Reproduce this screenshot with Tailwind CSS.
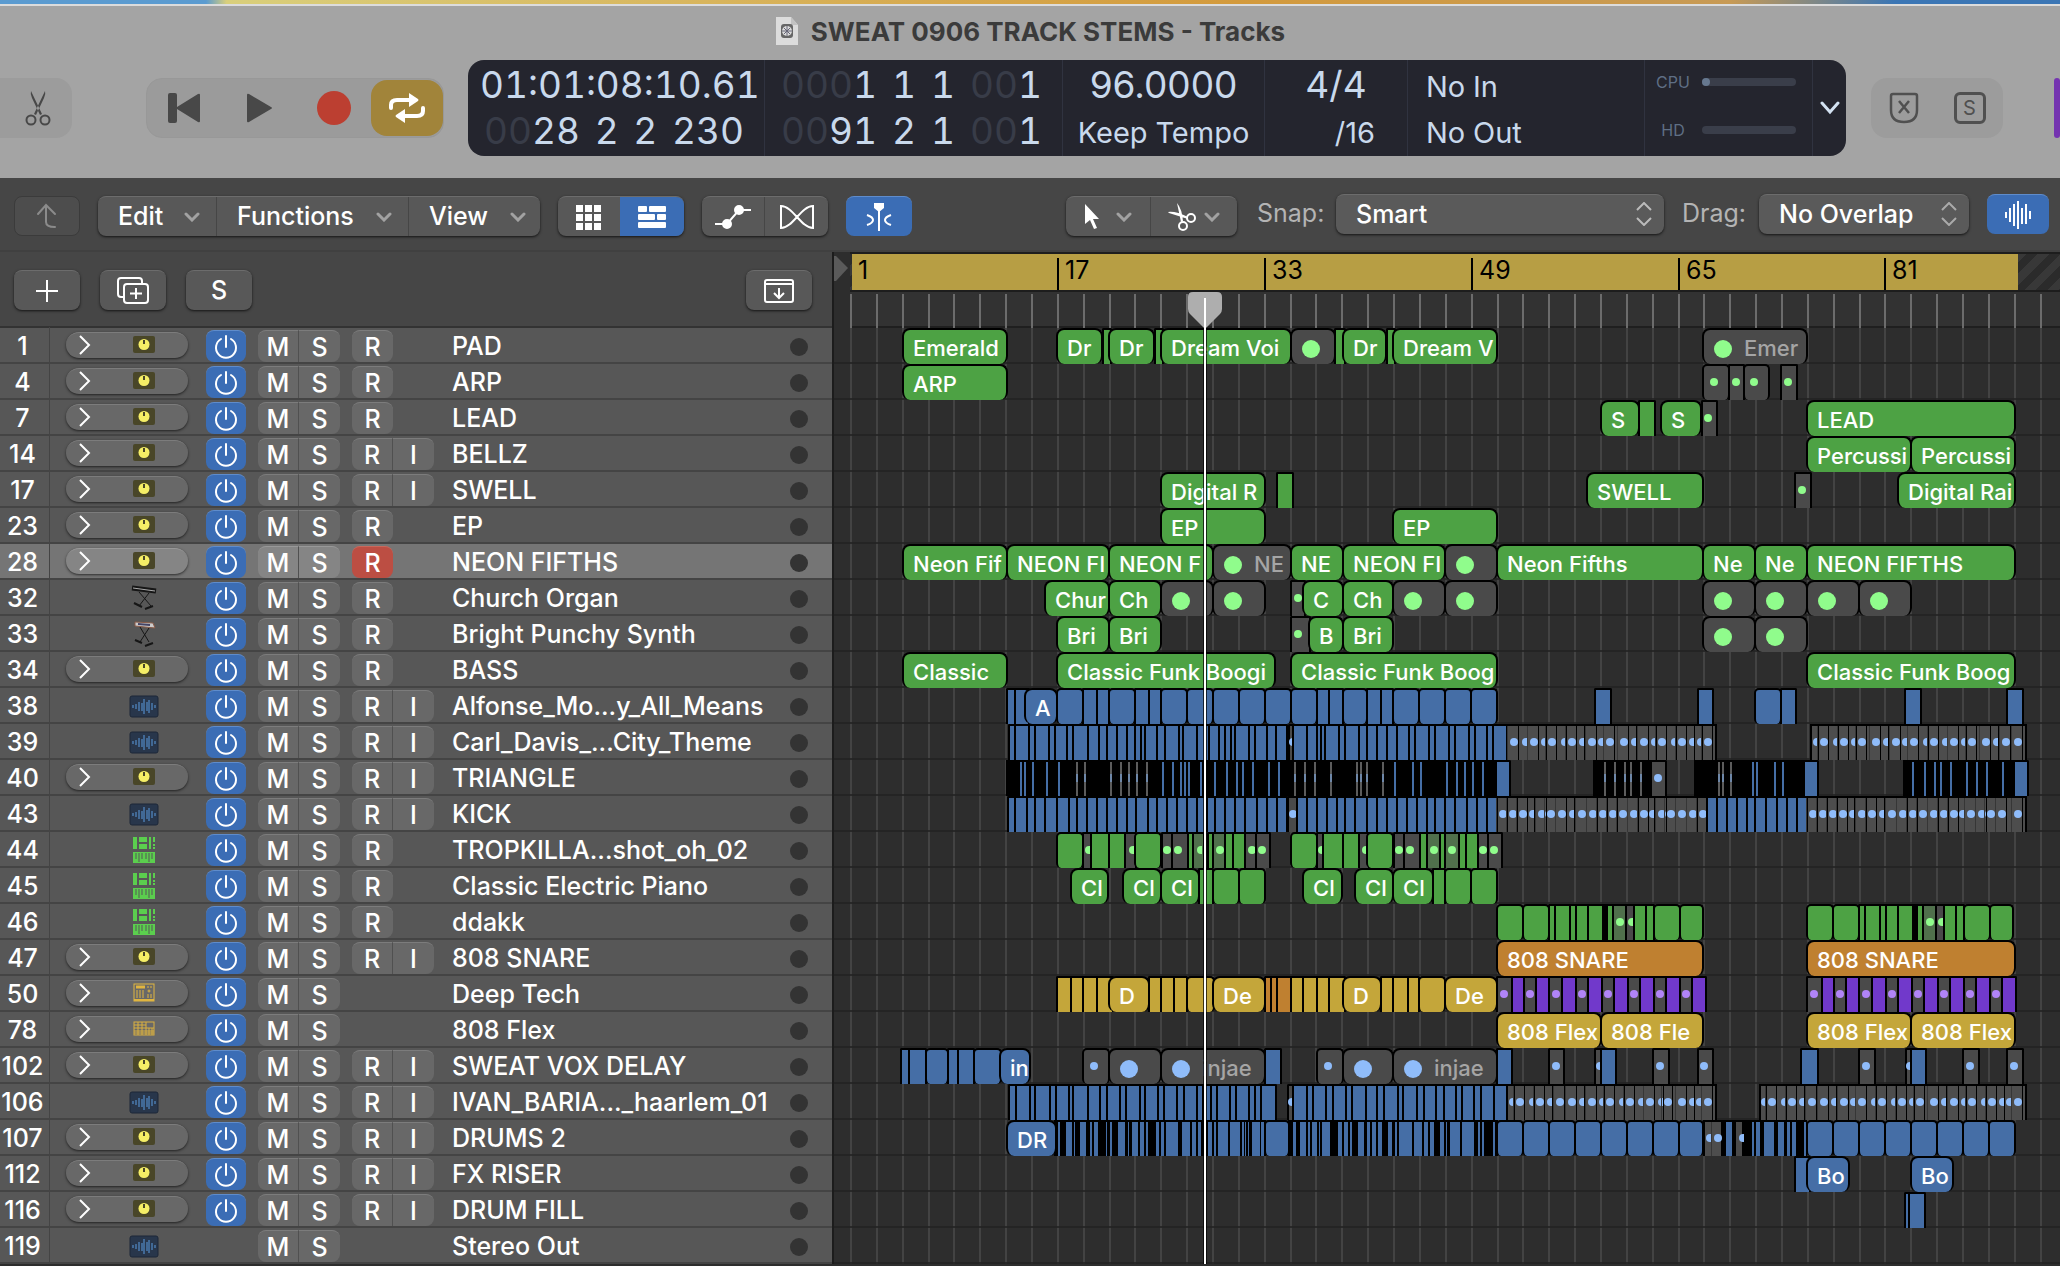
<!DOCTYPE html>
<html lang="en">

<head>
    <meta charset="UTF-8" />
    <title>SWEAT 0906 TRACK STEMS - Tracks</title>
    <script src="https://cdn.jsdelivr.net/npm/@tailwindcss/browser@4"></script>
</head>

<body class="bg-[#2d2d2d] min-h-screen overflow-x-hidden font-[Inter,sans-serif] text-white">
    <!-- Window header -->
    <header class="bg-[#a4a4a4]">
        <div class="h-1 bg-[linear-gradient(90deg,#5b9bd0_10%,#d9cf7c_11%,#d8b45c_35%,#d39a3c_60%,#c79a55_84%,#3b76b5_92%)]"></div>
        <div class="h-[2px] bg-[#dcdcdc]"></div>
        <h1 class="flex h-[50px] items-center justify-center gap-3 text-[26px] font-bold text-[#3b3b3b]">
            <svg width="24" height="30" viewBox="0 0 24 30"><path d="M1 1h15l7 8v20H1z" fill="#dcdcdc" /><path d="M16 1v8h7z" fill="#c2c2c2" /><rect x="6" y="8" width="12" height="14" rx="3" fill="#666" /><circle cx="12" cy="15" r="5" fill="#ddd" /><path d="M12 10v10M7 15h10M9 12l6 6M15 12l-6 6" stroke="#667" /></svg>
            SWEAT 0906 TRACK STEMS - Tracks
        </h1>

        <div class="flex h-[122px] items-start pt-1">
            <div class="mt-[18px] flex h-[60px] w-[72px] shrink-0 items-center justify-center rounded-r-2xl bg-[#9c9c9c] pl-1">
                <button aria-label="Cut"><svg width="26" height="36" viewBox="0 0 26 36"><path d="M6 1q-1 3 1 7l8 17 2-1zM20 1q1 3-1 7l-8 17-2-1z" fill="#484848" /><g fill="none" stroke="#484848" stroke-width="2"><circle cx="6" cy="30" r="4.500" /><circle cx="20" cy="30" r="4.500" /></g></svg></button>
            </div>
            <div class="mt-[18px] ml-[74px] flex h-[60px] w-[298px] shrink-0 items-center rounded-2xl border border-[#989898] bg-[#9b9b9b]">
                <button class="flex w-[74px] justify-center" aria-label="Go to start"><svg width="34" height="30" viewBox="0 0 34 30" fill="#484848"><rect x="1" y="0" width="9" height="30" rx="2" /><path d="M33 2v26q0 2-2 1L10 16q-2-1 0-2L31 1q2-1 2 1z" /></svg></button>
                <button class="flex w-[76px] justify-center" aria-label="Play"><svg width="27" height="30" viewBox="0 0 27 30" fill="#484848"><path d="M1 2v26q0 2 2 1l22-13q2-1 0-2L3 1Q1 0 1 2z" /></svg></button>
                <button class="flex w-[74px] justify-center" aria-label="Record"><span class="size-[34px] rounded-full bg-[#bc3f31]"></span></button>
                <button class="flex h-[56px] flex-1 items-center justify-center rounded-2xl bg-[#a1843a]" aria-label="Cycle"><svg width="38" height="32" viewBox="0 0 38 32" fill="none" stroke="#fff" stroke-width="4" stroke-linecap="round"><path d="M3 16v-3q0-5 6-5h13M35 16v3q0 5-6 5H16" /><path d="M21 1l9 6q1 1 0 2l-9 6zM17 17l-9 6q-1 1 0 2l9 6z" fill="#fff" stroke="none" /></svg></button>
            </div>

            <!-- LCD -->
            <div class="ml-6 flex h-24 w-[1378px] shrink-0 items-stretch rounded-2xl bg-[#24252e] text-[37px] leading-[46px] tabular-nums text-[#c9d9ec]">
                <div class="flex w-[297px] flex-col border-r border-[#303340] pl-3 pr-5 pt-[2px]">
                    <div class="whitespace-nowrap">01:01:08:10.61</div>
                    <div class="flex justify-between pl-1"><span><span class="text-[#383c48]">00</span>28</span><span>2</span><span>2</span><span>230</span></div>
                </div>
                <div class="flex w-[298px] flex-col border-r border-[#303340] pl-4 pr-5 pt-[2px]">
                    <div class="flex justify-between"><span><span class="text-[#383c48]">000</span>1</span><span>1</span><span>1</span><span><span class="text-[#383c48]">00</span>1</span></div>
                    <div class="flex justify-between"><span><span class="text-[#383c48]">00</span>91</span><span>2</span><span>1</span><span><span class="text-[#383c48]">00</span>1</span></div>
                </div>
                <div class="w-[202px] border-r border-[#303340] pt-[2px] text-center">
                    <div class="proportional-nums">96.0000</div>
                    <div class="text-[29px] leading-[50px]">Keep Tempo</div>
                </div>
                <div class="w-[143px] border-r border-[#303340] pt-[2px] text-center">
                    <div>4/4</div>
                    <div class="pr-8 text-right text-[29px] leading-[50px] proportional-nums">/16</div>
                </div>
                <div class="w-[237px] border-r border-[#303340] pl-[18px] pt-1 text-[29px]">
                    <div>No In</div>
                    <div>No Out</div>
                </div>
                <div class="flex w-[168px] flex-col justify-between border-r border-[#303340] pb-4 pl-2 pr-4 pt-3 text-base leading-5 text-[#5f6f85]">
                    <div class="flex items-center justify-between"><span class="w-10 text-center">CPU</span><span class="h-2 w-[94px] rounded-full bg-[#3a3e4a]"><span class="block size-2 rounded-full bg-[#66788f]"></span></span></div>
                    <div class="flex items-center justify-between"><span class="w-10 text-center">HD</span><span class="h-2 w-[94px] rounded-full bg-[#3a3e4a]"></span></div>
                </div>
                <button class="flex flex-1 items-center justify-center" aria-label="Display mode"><svg width="20" height="14" viewBox="0 0 20 14" fill="none" stroke="#d3e2f2" stroke-width="3" stroke-linecap="round"><path d="M2 2l8 9 8-9" /></svg></button>
            </div>

            <div class="mt-[18px] ml-[25px] flex h-[60px] w-[132px] shrink-0 items-center justify-around rounded-2xl bg-[#9c9c9c]">
                <button aria-label="Replace"><svg width="30" height="32" viewBox="0 0 30 32" fill="none" stroke="#505050" stroke-width="2.500"><path d="M4 2h22q2 0 2 2v14q0 12-13 12T2 18V4q0-2 2-2zM10 9l10 12M20 9L10 21" /></svg></button>
                <button class="flex size-8 items-center justify-center rounded-md border-[3px] border-[#505050] text-xl text-[#505050]" aria-label="Solo">S</button>
            </div>
            <div class="mt-[18px] ml-[51px] h-[60px] w-[60px] rounded-2xl bg-[#7433b0]"></div>
        </div>
    </header>

    <!-- Tracks menu bar -->
    <nav class="flex h-[74px] items-center whitespace-nowrap border-b-2 border-[#404040] bg-[#464646] pl-[14px] pt-1 text-[25px] font-medium">
        <button class="flex h-10 w-[66px] shrink-0 items-center justify-center rounded-lg border border-[#3b3b3b] bg-[#4d4d4d]" aria-label="Up"><svg width="22" height="26" viewBox="0 0 22 26" fill="none" stroke="#8b8b8b" stroke-width="2" stroke-linecap="round"><path d="M2 11l8-9 9 9M10 2v17q0 5 9 5" /></svg></button>
        <div class="ml-[18px] flex h-10 w-[442px] shrink-0 rounded-lg border-t border-[#6c6c6c] bg-[#585858] shadow-sm shadow-black/60">
            <button class="flex w-[119px] items-center justify-between border-r border-[#464646] pl-5 pr-4">Edit<svg width="16" height="10" viewBox="0 0 16 10" fill="none" stroke="#a2a2a2" stroke-width="3" stroke-linecap="round"><path d="M2 2l6 6 6-6" /></svg></button>
            <button class="flex w-[192px] items-center justify-between border-r border-[#464646] pl-5 pr-4">Functions<svg width="16" height="10" viewBox="0 0 16 10" fill="none" stroke="#a2a2a2" stroke-width="3" stroke-linecap="round"><path d="M2 2l6 6 6-6" /></svg></button>
            <button class="flex flex-1 items-center justify-between pl-5 pr-[14px]">View<svg width="16" height="10" viewBox="0 0 16 10" fill="none" stroke="#a2a2a2" stroke-width="3" stroke-linecap="round"><path d="M2 2l6 6 6-6" /></svg></button>
        </div>
        <div class="ml-[18px] flex h-10 w-[126px] shrink-0 overflow-hidden rounded-lg border-t border-[#6c6c6c] bg-[#585858] shadow-sm shadow-black/60">
            <button class="flex w-[62px] items-center justify-center" aria-label="Grid"><svg width="26" height="26" viewBox="0 0 26 26" fill="#fff"><path d="M0 1h7v7H0zM9 1h7v7H9zM18 1h7v7h-7zM0 10h7v7H0zM9 10h7v7H9zM18 10h7v7h-7zM0 19h7v7H0zM9 19h7v7H9zM18 19h7v7h-7z" /></svg></button>
            <button class="flex flex-1 items-center justify-center bg-[#3b6db5]" aria-label="Tracks"><svg width="28" height="24" viewBox="0 0 28 24" fill="#fff"><rect y="1" width="9" height="6" rx="1" /><rect x="11" y="1" width="17" height="6" rx="1" /><rect y="9" width="17" height="6" rx="1" /><rect x="19" y="9" width="9" height="6" rx="1" /><rect y="17" width="28" height="6" rx="1" /></svg></button>
        </div>
        <div class="ml-[18px] flex h-10 w-[126px] shrink-0 rounded-lg border-t border-[#6c6c6c] bg-[#585858] shadow-sm shadow-black/60">
            <button class="flex w-[63px] items-center justify-center border-r border-[#464646]" aria-label="Automation"><svg width="38" height="26" viewBox="0 0 38 26" fill="#fff" stroke="#fff" stroke-width="2"><path d="M1 20h12L25 6h12" fill="none" /><circle cx="13" cy="20" r="4" /><circle cx="25" cy="6" r="4" /></svg></button>
            <button class="flex w-[63px] items-center justify-center" aria-label="Flex"><svg width="36" height="24" viewBox="0 0 36 24" fill="none" stroke="#fff" stroke-width="2"><path d="M2 1v22C14 23 22 1 34 1v22C22 23 14 1 2 1z" /></svg></button>
        </div>
        <button class="ml-[18px] flex h-10 w-[66px] shrink-0 items-center justify-center rounded-lg border-t border-[#5f8ccb] bg-[#3b6db5]" aria-label="Catch"><svg width="28" height="30" viewBox="0 0 28 30" fill="none" stroke="#fff" stroke-width="2"><path d="M9 1h10v5l-5 4-5-4z" fill="#fff" stroke="none" /><path d="M14 8v21M2 13q6 2 6 5t-6 5M26 13q-6 2-6 5t6 5" /></svg></button>

        <div class="ml-[154px] flex h-10 w-[171px] shrink-0 rounded-lg border-t border-[#6c6c6c] bg-[#585858] shadow-sm shadow-black/60">
            <button class="flex w-[85px] items-center justify-center gap-4 border-r border-[#464646]" aria-label="Pointer tool"><svg width="16" height="26" viewBox="0 0 16 26" fill="#fff"><path d="M1 0v20l5-4 4 9 3-1-4-9h6z" /></svg><svg width="16" height="10" viewBox="0 0 16 10" fill="none" stroke="#a2a2a2" stroke-width="3" stroke-linecap="round"><path d="M2 2l6 6 6-6" /></svg></button>
            <button class="flex flex-1 items-center justify-center gap-2" aria-label="Scissors tool"><svg width="28" height="28" viewBox="0 0 28 28"><path d="M0 9q8-1 20 5v2L1 10zM9 0q5 6 6 18l-2 1z" fill="#fff" /><g fill="none" stroke="#fff" stroke-width="2"><circle cx="23" cy="15" r="4" /><circle cx="15" cy="23" r="4" /></g></svg><svg width="16" height="10" viewBox="0 0 16 10" fill="none" stroke="#a2a2a2" stroke-width="3" stroke-linecap="round"><path d="M2 2l6 6 6-6" /></svg></button>
        </div>
        <label for="snap" class="mb-1 ml-5 w-[71px] shrink-0 font-normal text-[#b4b4b4]">Snap:</label>
        <div class="relative mb-1 ml-2 h-10 w-[328px] shrink-0">
            <select id="snap" class="h-10 w-full appearance-none rounded-lg border-t border-[#6c6c6c] bg-[#5a5a5a] pl-5 shadow-sm shadow-black/60"><option>Smart</option></select>
            <svg class="pointer-events-none absolute right-3 top-2" width="16" height="24" viewBox="0 0 16 24" fill="none" stroke="#bbb" stroke-width="2"><path d="M1 8l7-7 7 7M1 16l7 7 7-7" /></svg>
        </div>
        <label for="drag" class="mb-1 ml-[18px] w-[73px] shrink-0 font-normal text-[#b4b4b4]">Drag:</label>
        <div class="relative mb-1 h-10 w-[210px] shrink-0 ml-1">
            <select id="drag" class="h-10 w-full appearance-none rounded-lg border-t border-[#6c6c6c] bg-[#5a5a5a] pl-5 shadow-sm shadow-black/60"><option>No Overlap</option></select>
            <svg class="pointer-events-none absolute right-3 top-2" width="16" height="24" viewBox="0 0 16 24" fill="none" stroke="#aaa" stroke-width="2"><path d="M1 8l7-7 7 7M1 16l7 7 7-7" /></svg>
        </div>
        <button class="mb-1 ml-[18px] flex h-10 w-[62px] shrink-0 items-center justify-center rounded-lg border-t border-[#5f8ccb] bg-[#3b6db5]" aria-label="Waveform zoom"><svg width="26" height="30" viewBox="0 0 26 30" stroke="#fff" stroke-width="2"><path d="M1 12v6M5 8v14M9 4v22M13 1v28M17 8v16M21 4v20M25 11v8" /></svg></button>
    </nav>

    <main class="flex">
        <!-- Track headers -->
        <section class="w-[834px] shrink-0 border-r-2 border-[#1c1c1c] bg-[#464646]">
            <div class="flex h-[76px] items-center border-b-2 border-[#333] pl-[14px] pr-5 pt-[2px] text-[25px] font-medium">
                <button class="flex h-10 w-[66px] items-center justify-center rounded-lg border-t border-[#6c6c6c] bg-[#585858] shadow-sm shadow-black/60" aria-label="Add track"><svg width="22" height="22" viewBox="0 0 22 22" stroke="#fff" stroke-width="2"><path d="M11 0v22M0 11h22" /></svg></button>
                <button class="ml-5 flex h-10 w-[66px] items-center justify-center rounded-lg border-t border-[#6c6c6c] bg-[#585858] shadow-sm shadow-black/60" aria-label="Duplicate track"><svg width="32" height="27" viewBox="0 0 32 27" fill="none" stroke="#fff" stroke-width="2"><path d="M7 20H4q-3 0-3-3V4q0-3 3-3h18q3 0 3 3v2" /><rect x="7" y="7" width="24" height="19" rx="3" /><path d="M19 11v11M13 16.500h12" /></svg></button>
                <button class="ml-5 flex h-10 w-[66px] items-center justify-center rounded-lg border-t border-[#6c6c6c] bg-[#585858] shadow-sm shadow-black/60">S</button>
                <button class="ml-auto flex h-10 w-[66px] items-center justify-center rounded-lg border-t border-[#6c6c6c] bg-[#585858] shadow-sm shadow-black/60" aria-label="Track import"><svg width="30" height="24" viewBox="0 0 30 24" fill="none" stroke="#fff" stroke-width="2"><rect x="1" y="1" width="28" height="22" rx="2" /><path d="M1 5h28M15 9v10M10 14l5 5 5-5" /></svg></button>
            </div>
            <div id="headers" class="text-[25px] font-medium"></div>
        </section>

        <!-- Arrange area -->
        <section class="relative min-w-0 flex-1 overflow-hidden bg-[#2d2d2d] pl-4">
            <svg class="absolute left-0 top-1" width="16" height="26" viewBox="0 0 16 26"><path d="M0 0h2l12 12L2 25H0z" fill="#5a5a5a" /></svg>
            <div class="relative">
                <div class="h-[76px] border-b-2 border-[#1f1f1f] bg-[#323232]">
                    <div class="h-10 border-b-2 border-t-2 border-[#1d1d1d] bg-[repeating-linear-gradient(135deg,#2b2b2b_0px,#2b2b2b_8px,#383838_8px,#383838_16px)]">
                        <div class="ml-[2px] h-9 w-[1166px] bg-[#b79e44]"></div>
                    </div>
                </div>
                <div id="ruler" class="absolute inset-0 h-[76px] text-[25px] leading-8 text-black"></div>
                <div id="grid" class="absolute inset-0 top-[76px]"></div>
                <div id="lanes" class="relative text-[22px] font-medium"></div>
                <!-- Playhead -->
                <div class="absolute inset-y-0 left-[338px] w-[34px] pt-10">
                    <svg width="34" height="36" viewBox="0 0 34 36"><path d="M5 0h24q5 0 5 5v12q0 3-2 5L19 35q-2 2-4 0L2 22q-2-2-2-5V5q0-5 5-5z" fill="#aeaeae" /></svg>
                    <div class="absolute bottom-0 left-[15px] top-[76px] w-1 bg-black/70"></div>
                    <div class="absolute bottom-0 left-4 top-[46px] w-[2px] bg-white"></div>
                </div>
            </div>
        </section>
    </main>

    <script>
        const fills = {
            g: "bg-[#4da244]",
            b: "bg-[#456ea6]",
            o: "bg-[#bf8030]",
            y: "bg-[#c4a63a]",
            p: "bg-[#7139cb]",
            m: "bg-[#4a4a4a]",
            t: "bg-[#50704c]"
        };
        const dotFills = { g: "bg-[#90fc8c]", b: "bg-[#8fbcfa]", p: "bg-[#b184f8]" };

        const box = (cls, x, w, inner = "") => `<div class="absolute inset-y-0 ${cls}" style="left:${x}px;width:${w}px">${inner}</div>`;

        // small dot of a muted region, centered on x; a negative x is a dot cut off by its neighbour
        const dot = (c, x) => x < 0 ?
            `<div class="absolute top-[14px] h-2 w-[5px] rounded-l-full ${dotFills[c]}" style="left:${-x - 3}px"></div>` :
            `<div class="absolute top-[14px] size-2 rounded-full ${dotFills[c]}" style="left:${x - 4}px"></div>`;

        // one region
        function reg(c, a, b, label = "") {
            const w = b - a + 2;
            const r = label ? "rounded-lg" : w > 22 ? "rounded-[5px]" : "rounded-t-[2px]";
            const text = label ? `<span class="absolute left-[9px] top-px leading-[35px]">${label}</span>` : "";
            return box(`overflow-hidden whitespace-nowrap border-x-2 border-t-2 border-black ${r} ${fills[c]}`, a, w, text);
        }

        // muted region with a big dot
        function mute(c, a, b, label = "") {
            return box("overflow-hidden whitespace-nowrap rounded-lg border-x-2 border-t-2 border-black bg-[#4a4a4a]", a, b - a + 2,
                `<span class="absolute left-[10px] top-[10px] size-[18px] rounded-full ${dotFills[c]}"></span><span class="absolute left-10 top-px leading-[35px] text-[#a5a5a5]">${label}</span>`);
        }

        // muted region with a small dot
        const tiny = (c, a, b, x, fill = "m") => reg(fill, a, b) + dot(c, x);

        // neighbouring regions that share their edges
        function cuts(c, list) {
            let out = "";
            for (let i = 0; i < list.length - 1; i++) out += reg(c, list[i], list[i + 1]);
            return out;
        }

        // very short regions: only hairlines are left between the outlines
        function ticks(a, b, colors) {
            let out = box("bg-black", a, b - a);
            (colors.b || []).forEach(x => out += box("mt-[2px] bg-[#456ea6]", x, 2));
            (colors.m || []).forEach(x => out += box("mt-[2px] bg-[#5c5c5c]", x, 2, '<span class="absolute top-3 h-2 w-full bg-[#6e87a8]"></span>'));
            return out;
        }

        function slices(c, a, b, list) {
            let out = box("bg-black", a, b - a);
            for (let i = 0; i < list.length; i += 2) out += box(`mt-[2px] ${fills[c]}`, list[i], list[i + 1] - list[i]);
            return out;
        }

        // a run of muted short regions
        function dots(c, a, b, list) {
            let out = box("border-x-2 border-t-2 border-black bg-[#4d4d4d]", a, b - a + 2);
            list.forEach(x => {
                if (x > 0) out += box("mt-[2px] bg-[#363636]", x - 7, 1);
                out += dot(c, x);
                out += box("bg-black", x < 0 ? -x + 2 : x + 4, 1);
            });
            return out;
        }

        function snare(o) {
            return cuts("g", [646, 672, 698, 704, 719, 725, 737, 752].map(x => x + o)) + slices("g", 752 + o, 765 + o, [758 + o, 762 + o]) +
                tiny("g", 762 + o, 775 + o, 770 + o, "t") + tiny("g", 775 + o, 783 + o, -781 - o) +
                cuts("g", [783, 795, 803, 829, 852].map(x => x + o));
        }

        function deep(o) {
            const p = [646, 661, 673, 685, 698, 711, 725, 737, 751, 763, 777, 789, 803, 815, 829, 841, 855];
            const d = [654, 680, 706, 732, 758, 784, 810, 836];
            let out = "";
            for (let i = 0; i < 8; i++) out += tiny("p", p[2 * i] + o, p[2 * i + 1] + o, d[i] + o) + reg("p", p[2 * i + 1] + o, p[2 * i + 2] + o);
            return out;
        }

        const tracks = [
            [1, "PAD", "k", "R", reg("g", 52, 156, "Emerald") + reg("g", 206, 251, "Dr") + reg("g", 252, 260) + reg("g", 258, 303, "Dr") + reg("g", 304, 312) + reg("g", 310, 440, "Dream Voi") + mute("g", 440, 484) + reg("g", 484, 494) + reg("g", 492, 535, "Dr") + reg("g", 536, 544) + reg("g", 542, 646, "Dream V") + mute("g", 852, 956, "Emer")],
            [4, "ARP", "k", "R", reg("g", 52, 156, "ARP") + tiny("g", 852, 878, 864) + tiny("g", 878, 893, 886) + tiny("g", 893, 918, 904) + tiny("g", 930, 946, 938)],
            [7, "LEAD", "k", "R", reg("g", 750, 788, "S") + reg("g", 788, 804) + reg("g", 810, 850, "S") + tiny("g", 851, 866, 858) + reg("g", 956, 1164, "LEAD")],
            [14, "BELLZ", "k", "RI", reg("g", 956, 1060, "Percussi") + reg("g", 1060, 1164, "Percussi")],
            [17, "SWELL", "k", "RI", reg("g", 310, 414, "Digital R") + reg("g", 426, 442) + reg("g", 736, 852, "SWELL") + tiny("g", 944, 960, 952) + reg("g", 1047, 1164, "Digital Rai")],
            [23, "EP", "k", "R", reg("g", 310, 414, "EP") + reg("g", 542, 646, "EP")],
            [28, "NEON FIFTHS", "k", "R", reg("g", 52, 156, "Neon Fif") + reg("g", 156, 258, "NEON FI") + reg("g", 258, 362, "NEON F") + mute("g", 362, 440, "NE") + reg("g", 440, 492, "NE") + reg("g", 492, 594, "NEON FI") + mute("g", 594, 646) + reg("g", 646, 852, "Neon Fifths") + reg("g", 852, 904, "Ne") + reg("g", 904, 956, "Ne") + reg("g", 956, 1164, "NEON FIFTHS")],
            [32, "Church Organ", "organ", "R", reg("g", 194, 258, "Chur") + reg("g", 258, 310, "Ch") + mute("g", 310, 362) + mute("g", 362, 414) + tiny("g", 440, 454, 448) + reg("g", 452, 492, "C") + reg("g", 492, 542, "Ch") + mute("g", 542, 594) + mute("g", 594, 646) + mute("g", 852, 904) + mute("g", 904, 956) + mute("g", 956, 1008) + mute("g", 1008, 1060)],
            [33, "Bright Punchy Synth", "synth", "R", reg("g", 206, 258, "Bri") + reg("g", 258, 310, "Bri") + tiny("g", 440, 459, 448) + reg("g", 458, 492, "B") + reg("g", 492, 542, "Bri") + mute("g", 852, 904) + mute("g", 904, 956)],
            [34, "BASS", "k", "R", reg("g", 52, 156, "Classic") + reg("g", 206, 424, "Classic Funk Boogi") + reg("g", 440, 646, "Classic Funk Boog") + reg("g", 956, 1164, "Classic Funk Boog")],
            [38, "Alfonse_Mo...y_All_Means", "wave", "RI", cuts("b", [156, 164, 178]) + reg("b", 174, 206, "A") + cuts("b", [206, 232, 246, 258, 284, 298, 310, 336, 362, 388, 414, 440, 466, 478, 492, 516, 530, 542, 568, 594, 620, 646]) + reg("b", 744, 760) + reg("b", 847, 862) + cuts("b", [904, 930, 945]) + reg("b", 1054, 1070) + reg("b", 1156, 1172)],
            [39, "Carl_Davis_...City_Theme", "wave", "RI", cuts("b", [158, 164, 178, 184, 198, 204, 216, 222, 237, 248, 256, 266, 276, 284, 290, 294, 306, 314, 328, 332, 346, 358, 368, 374, 380, 384, 398, 404, 416, 425, 436]) + tiny("b", 438, 443, -442) + cuts("b", [442, 456, 466, 470, 474, 488, 494, 508, 516, 526, 536, 546, 558, 564, 578, 584, 598, 604, 618, 624, 636, 642, 656]) + dots("b", 656, 865, [664, -675, 684, -694, 702, -714, 722, -732, 742, -751, 760, 774, -784, 794, -804, 812, -824, 832, -842, -850, 858]) + dots("b", 960, 1175, [-966, 974, -986, 994, -1004, 1012, 1026, -1036, 1046, -1055, 1064, -1076, 1084, -1095, 1104, -1114, 1122, 1136, -1146, 1156, 1168])],
            [40, "TRIANGLE", "k", "RI", ticks(156, 647, { b: [170, 174, 182, 196, 208, 312, 322, 330, 334, 338, 350, 364, 376, 386, 392, 402, 418, 428, 544, 562, 570, 596, 606, 614, 622, 632], m: [226, 234, 260, 270, 278, 286, 296, 444, 454, 464, 480, 506, 510, 516, 532] }) + reg("b", 645, 659) + ticks(743, 803, { m: [754, 764, 774, 780, 790] }) + tiny("b", 800, 815, 808) + ticks(844, 956, { m: [868, 872, 880], b: [902, 906, 924, 932] }) + reg("b", 953, 967) + ticks(1053, 1164, { b: [1062, 1074, 1084, 1090, 1100, 1116, 1126, 1136, 1152] }) + reg("b", 1163, 1177)],
            [43, "KICK", "wave", "RI", cuts("b", [157, 164, 176, 184, 194, 206, 218, 226, 236, 246, 256, 266, 276, 285, 297, 306, 316, 326, 336, 346, 356, 364, 374, 384, 394, 406, 416, 426, 436]) + tiny("b", 437, 446, 443) + cuts("b", [446, 456, 466, 476, 486, 494, 504, 516, 526, 536, 546, 556, 566, 576, 584, 594, 604, 616, 626, 636, 646]) + dots("b", 646, 856, [653, 663, 673, -682, 692, 701, 712, -722, 732, 743, 753, 763, 773, 784, 794, -802, 812, 821, 832, 843, 853]) + cuts("b", [856, 866, 876, 886, 896, 904, 915, 926, 936, 946, 956]) + dots("b", 956, 1175, [963, 973, 983, 993, -1002, 1012, 1022, -1032, 1042, 1053, 1063, 1073, 1084, 1094, 1104, -1112, 1121, 1132, 1141, 1152, 1168])],
            [44, "TROPKILLA...shot_oh_02", "piano", "R", reg("g", 206, 232) + tiny("g", 232, 241, -238) + cuts("g", [240, 258, 274]) + tiny("g", 274, 285, -282) + reg("g", 284, 310) + tiny("g", 311, 321, 317) + tiny("g", 321, 337, 328) + reg("g", 337, 342) + tiny("g", 342, 353, -350, "t") + reg("g", 357, 362) + tiny("g", 362, 374, 370, "t") + cuts("g", [374, 382, 394]) + tiny("g", 394, 405, 402) + tiny("g", 405, 419, 412) + reg("g", 440, 466) + tiny("g", 466, 474, -471) + cuts("g", [472, 492, 508]) + tiny("g", 508, 518, -515) + reg("g", 516, 542) + tiny("g", 543, 553, 549) + tiny("g", 553, 569, 560) + reg("g", 569, 576) + tiny("g", 576, 589, 584, "t") + reg("g", 589, 594) + tiny("g", 594, 608, 602, "t") + cuts("g", [608, 615, 627]) + tiny("g", 627, 637, 633) + tiny("g", 637, 651, 644)],
            [45, "Classic Electric Piano", "piano", "R", reg("g", 220, 257, "Cl") + reg("g", 272, 310, "Cl") + reg("g", 310, 348, "Cl") + cuts("g", [348, 362, 388, 414]) + reg("g", 452, 491, "Cl") + reg("g", 504, 542, "Cl") + reg("g", 542, 582, "Cl") + cuts("g", [582, 594, 620, 646])],
            [46, "ddakk", "piano", "R", snare(0) + snare(310)],
            [47, "808 SNARE", "k", "RI", reg("o", 646, 852, "808 SNARE") + reg("o", 956, 1164, "808 SNARE")],
            [50, "Deep Tech", "drum", "", cuts("y", [206, 220, 232, 246, 262]) + reg("y", 258, 298, "D") + cuts("y", [298, 310, 323, 336, 363]) + reg("y", 362, 414, "De") + cuts("o", [414, 420, 426, 440]) + cuts("y", [440, 452, 466, 478, 494]) + reg("y", 492, 530, "D") + cuts("y", [530, 542, 557, 568, 594]) + reg("y", 594, 646, "De") + deep(0) + deep(310)],
            [78, "808 Flex", "pads", "", reg("y", 646, 750, "808 Flex") + reg("y", 750, 852, "808 Fle") + reg("y", 956, 1060, "808 Flex") + reg("y", 1060, 1164, "808 Flex")],
            [102, "SWEAT VOX DELAY", "k", "RI", cuts("b", [50, 58, 75, 97, 107, 123, 150]) + reg("b", 149, 179, "in") + tiny("b", 232, 258, 244) + mute("b", 258, 310) + mute("b", 310, 414, "injae") + reg("b", 414, 430) + tiny("b", 466, 492, 478) + mute("b", 492, 542) + mute("b", 542, 646, "injae") + reg("b", 646, 661) + tiny("b", 698, 713, 706) + tiny("b", 744, 752, -749) + reg("b", 750, 765) + tiny("b", 802, 818, 810) + tiny("b", 847, 862, 854) + reg("b", 950, 967) + tiny("b", 1008, 1024, 1016) + tiny("b", 1055, 1062, -1059) + reg("b", 1060, 1075) + tiny("b", 1112, 1128, 1120) + tiny("b", 1156, 1172, 1164)],
            [106, "IVAN_BARIA..._haarlem_01", "wave", "RI", cuts("b", [158, 165, 179, 184, 199, 205, 218, 222, 237, 249, 256, 269, 275, 289, 294, 307, 313, 326, 333, 346, 352, 360, 366, 379, 385, 398, 404, 410, 425]) + tiny("b", 437, 443, -441) + cuts("b", [442, 456, 462, 475, 482, 495, 501, 515, 526, 533, 547, 552, 566, 573, 585, 593, 605, 611, 623, 630, 643, 656]) + dots("b", 656, 865, [-662, 670, -682, 690, -700, 710, 722, -732, 742, -752, 760, -772, 780, -791, 800, -811, 818, 832, -842, -849, 858]) + dots("b", 909, 1175, [-914, 922, -934, 942, -952, 962, 974, -984, 994, -1003, 1012, -1024, 1032, -1044, 1052, -1062, 1070, 1084, -1094, 1104, -1114, 1122, -1134, 1142, -1152, -1159, 1168])],
            [107, "DRUMS 2", "k", "RI", slices("b", 204, 416, [208, 210, 216, 222, 224, 225, 230, 236, 240, 242, 244, 248, 256, 257, 260, 262, 268, 275, 278, 279, 282, 288, 290, 294, 296, 298, 306, 309, 311, 314, 316, 328, 332, 340, 342, 346, 348, 351, 358, 362, 364, 366, 368, 378, 380, 390, 392, 394, 395, 396, 398, 399, 402, 410, 411, 414]) + reg("b", 156, 205, "DR") + slices("b", 438, 648, [443, 446, 450, 456, 458, 460, 462, 467, 469, 470, 472, 480, 488, 492, 494, 498, 500, 502, 508, 514, 517, 520, 522, 526, 528, 532, 538, 542, 545, 547, 549, 562, 564, 572, 574, 578, 580, 584, 590, 594, 596, 597, 600, 610, 612, 624, 628, 630, 632, 634, 643, 645]) + reg("b", 414, 438) + cuts("b", [646, 672, 698, 724, 750, 776, 802, 828, 852]) + dots("b", 853, 871, [-859, 868]) + slices("b", 872, 957, [876, 882, 902, 904, 906, 910, 914, 924, 928, 934, 937, 940, 942, 946, 954, 956]) + tiny("b", 884, 892, -892) + cuts("b", [956, 982, 1008, 1034, 1060, 1086, 1112, 1138, 1164])],
            [112, "FX RISER", "k", "RI", reg("b", 944, 959) + reg("b", 956, 998, "Bo") + reg("b", 1060, 1102, "Bo")],
            [116, "DRUM FILL", "k", "RI", cuts("b", [1054, 1058, 1074])],
            [119, "Stereo Out", "wave", "-", ""]
        ];

        const icons = {
            k: '<svg width="22" height="17" viewBox="0 0 22 17"><rect width="22" height="17" rx="2" fill="#494628"/><circle cx="11" cy="8.500" r="5.500" fill="#f5ee66"/><path d="M11 4v4" stroke="#494628" stroke-width="2"/></svg>',
            wave: '<svg width="30" height="23" viewBox="0 0 30 23"><rect x="1" y="1" width="28" height="21" rx="2" fill="#28364b" stroke="#1d2738"/><path d="M4 10v3M7 9v5M10 7v9M13 8v8M15 4v15M18 7v9M20 5v13M23 8v7M26 10v3" stroke="#5b9be0"/></svg>',
            piano: '<svg width="22" height="26" viewBox="0 0 22 26" fill="#5bce4e"><path d="M0 0h4v12H0zM6 0h8v5H6zM6 7h8v5H6zM16 0h2v12h-2zM20 0h2v5h-2zM20 7h2v2h-2zM20 10h2v2h-2zM0 15h22v11H0z"/><path d="M3 16v6M6 16v9M9 16v6M13 16v6M16 16v9M19 16v6" stroke="#575757"/></svg>',
            drum: '<svg width="22" height="19" viewBox="0 0 22 19" fill="none" stroke="#e0b540"><rect x="1" y="1" width="20" height="17"/><path d="M3 4h9" stroke-width="3"/><path d="M3 8h9M3 10h9M3 12h9M3 14h9M14 4h5M14 12h5M14 14h5" stroke-dasharray="2 1"/><circle cx="16" cy="8" r="1"/><path d="M1 17h20" stroke-width="2"/></svg>',
            pads: '<svg width="22" height="15" viewBox="0 0 22 15" fill="none" stroke="#d9b040"><rect x="1" y="1" width="20" height="13"/><path d="M5 1v13M9 1v13M13 1v13M1 4h12M1 7h20M1 10h20M1 12h20M16 7v7M19 7v7"/></svg>',
            organ: '<svg width="28" height="26" viewBox="0 0 28 26" fill="none" stroke="#161616" stroke-width="1"><path d="M2 3l24 3" stroke-width="5"/><path d="M3 3l22 3" stroke="#aaa"/><path d="M9 7l12 14M19 8L9 21"/><path d="M4 18l8 4M15 24l8-3" stroke-width="2"/></svg>',
            synth: '<svg width="24" height="26" viewBox="0 0 24 26" fill="none" stroke="#161616" stroke-width="1"><path d="M3 1l18 1 2 5-20-2z" fill="#ccc" stroke="#8a5b48"/><path d="M6 3l12 1" stroke="#446" stroke-width="2"/><path d="M8 6l9 15M17 7L8 21"/><path d="M3 19l7 3M13 25l8-3" stroke-width="2"/></svg>'
        };

        const btn = "flex h-8 items-center justify-center border-t pt-[2px]";

        function header([num, name, icon, rec], sel) {
            const key = sel ? "border-[#989898] bg-[#858585]" : "border-[#7c7c7c] bg-[#686868]";
            const stack = ["k", "drum", "pads"].includes(icon);
            return `
            <div class="flex h-9 items-center border-b-2 border-[#444] pt-[2px] ${sel ? "bg-[#757575]" : "bg-[#575757]"}">
                <div class="-mt-[2px] flex h-9 w-[50px] shrink-0 items-center justify-center border-r border-[#444] pr-1 pt-1">${num}</div>
                ${stack ? `<button class="relative mb-[2px] ml-4 h-[26px] w-[122px] shrink-0 rounded-full border-t shadow-sm shadow-black/50 ${key}" aria-label="Open ${name}">
                    <svg class="absolute left-[13px] top-[2px]" width="12" height="20" viewBox="0 0 12 20" fill="none" stroke="#fff" stroke-width="2"><path d="M1 1l9 9-9 9"/></svg>
                    <span class="flex h-full items-center justify-center pb-[2px] pl-9 pr-[2px]">${icons[icon]}</span>
                </button>` : `<div class="ml-4 flex w-[122px] shrink-0 justify-center pl-9 pr-[2px]">${icons[icon]}</div>`}
                ${rec == "-" ? '<div class="ml-[18px] w-10 shrink-0"></div>' : `<button class="${btn} ml-[18px] w-10 shrink-0 rounded-lg border-[#5f8ccb] bg-[#3b6db5]" aria-label="Power ${name}">
                    <svg class="mb-[2px]" width="24" height="24" viewBox="0 0 24 24" fill="none" stroke="#fff" stroke-width="2" stroke-linecap="round"><path d="M12 1v11M7 4a10 10 0 1 0 10 0"/></svg>
                </button>`}
                <div class="ml-3 flex shrink-0">
                    <button class="${btn} w-[41px] rounded-l-lg border-r border-r-[#505050] ${key}">M</button>
                    <button class="${btn} w-[41px] rounded-r-lg ${key}">S</button>
                </div>
                <div class="ml-3 flex w-[100px] shrink-0">
                    ${rec[0] == "R" ? `<button class="${btn} w-[41px] ${rec == "RI" ? "rounded-l-lg border-r border-r-[#505050]" : "rounded-lg"} ${sel ? "border-[#c9675a] bg-[#bc4e43]" : key}">R</button>` : ""}
                    ${rec == "RI" ? `<button class="${btn} w-[41px] rounded-r-lg ${key}">I</button>` : ""}
                </div>
                <div class="flex-1 whitespace-nowrap pt-[2px]">${name}</div>
                <span class="mr-6 mt-[2px] size-[18px] shrink-0 rounded-full bg-[#333]"></span>
            </div>`;
        }

        document.getElementById("headers").innerHTML = tracks.map(t => header(t, t[0] == 28)).join("");
        document.getElementById("lanes").innerHTML = tracks.map(t =>
            `<div class="relative h-9"><div class="absolute inset-x-0 bottom-0 -ml-4 h-[2px] bg-[#222]/80"></div>${t[4]}</div>`).join("");

        // a line every two bars, a number every sixteen
        const bar = 12.93;
        let ruler = "";
        let grid = "";
        for (let b = 0; b <= 92; b += 2) {
            const x = Math.round(b * bar);
            grid += `<div class="absolute inset-y-0 w-[2px] bg-[#434343]" style="left:${x}px"></div>`;
            ruler += `<div class="absolute bottom-0 top-[42px] w-[2px] bg-[#6c6c6c]" style="left:${x}px"></div>`;
            if (b % 16 == 0 && b < 90) ruler += `<div class="absolute top-[6px] h-8 pl-[6px] ${b ? "border-l-2 border-black" : "ml-[2px]"}" style="left:${x}px"><span class="block -mt-1">${b + 1}</span></div>`;
        }
        document.getElementById("ruler").innerHTML = ruler;
        document.getElementById("grid").innerHTML = grid;
    </script>
</body>

</html>
